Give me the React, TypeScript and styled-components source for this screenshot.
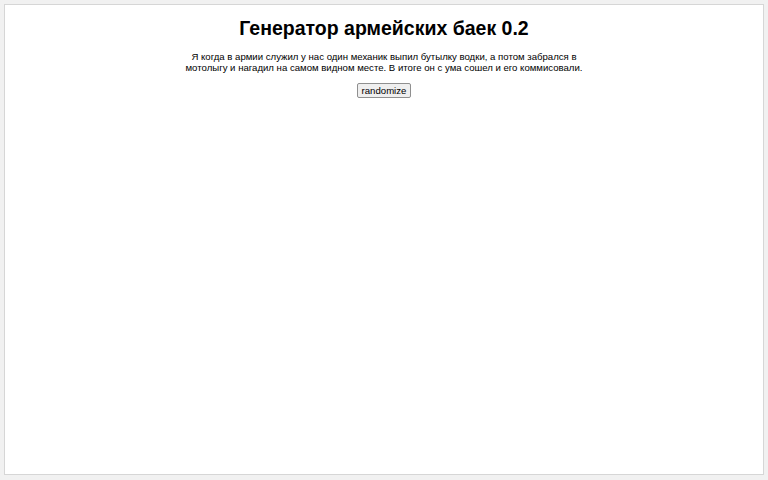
import React from "react";
import styled, { createGlobalStyle } from "styled-components";

const Global = createGlobalStyle`
  html, body { margin: 0; padding: 0; background: #f1f1f1; }
  body { font-family: "Liberation Sans", Arial, sans-serif; color: #000; }
`;

const Page = styled.div`
  padding: 4px 4px 5px 4px;
`;

const Card = styled.main`
  box-sizing: border-box;
  height: 471px;
  background: #fff;
  border: 1px solid #d6d6d6;
  display: flex;
  flex-direction: column;
  align-items: center;
  padding-top: 11px;
`;

const Title = styled.h1`
  margin: 0;
  font-size: 19.5px;
  font-weight: bold;
  line-height: 24px;
`;

const Story = styled.p`
  margin: 11px 0 0;
  width: 400px;
  font-size: 9.6px;
  line-height: 11px;
  text-align: center;
`;

const Button = styled.button`
  margin-top: 10px;
  font-family: "Liberation Sans", Arial, sans-serif;
  font-size: 9.6px;
  padding: 1px 4px;
  background: #efefef;
  border: 1px solid #8f8f8f;
  border-radius: 2px;
  color: #000;
`;

export default function App() {
  return (
    <>
      <Global />
      <Page>
        <Card>
          <Title>Генератор армейских баек 0.2</Title>
          <Story>
            Я когда в армии служил у нас один механик выпил бутылку водки, а потом забрался в мотолыгу и нагадил на самом видном месте. В итоге он с ума сошел и его коммисовали.
          </Story>
          <Button>randomize</Button>
        </Card>
      </Page>
    </>
  );
}
